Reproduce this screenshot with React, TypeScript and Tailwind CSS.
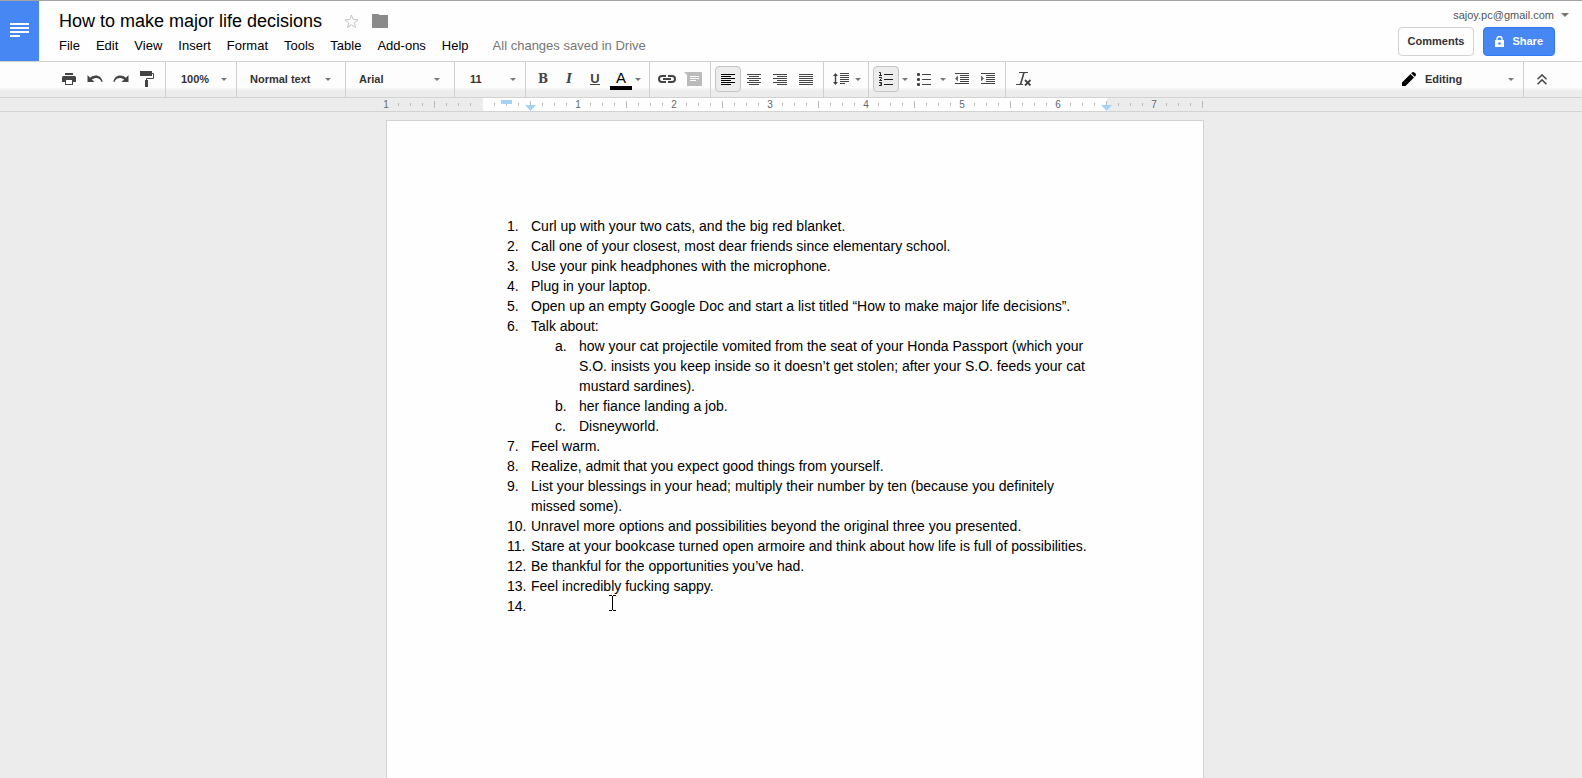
import type { ReactNode } from "react";

const INK = "#444444";

function Caret({ color = "#777777", large = false }: { color?: string; large?: boolean }) {
  return large ? (
    <svg width="8" height="4" viewBox="0 0 8 4" aria-hidden="true">
      <path d="M0 0h8L4 4z" fill={color} />
    </svg>
  ) : (
    <svg width="6" height="3" viewBox="0 0 6 3" aria-hidden="true">
      <path d="M0 0h6L3 3z" fill={color} />
    </svg>
  );
}

function ToolButton({ label, active = false, children }: { label: string; active?: boolean; children: ReactNode }) {
  return (
    <button
      type="button"
      aria-label={label}
      aria-pressed={active}
      className={
        active
          ? "flex size-[26px] items-center justify-center rounded-sm border border-[#c4c4c4] bg-[#ececec] text-black"
          : "flex size-[26px] items-center justify-center text-[#444444]"
      }
    >
      {children}
    </button>
  );
}

function MenuCaret({ label, wide = false }: { label: string; wide?: boolean }) {
  return (
    <button
      type="button"
      aria-label={label}
      className={wide ? "flex h-[26px] w-3 items-center justify-center" : "flex h-[26px] w-2 items-center justify-center"}
    >
      <Caret />
    </button>
  );
}

function Group({ children, className = "px-1" }: { children: ReactNode; className?: string }) {
  return <div className={`flex h-full items-start border-r border-[#cfcfcf] pt-1 ${className}`}>{children}</div>;
}

function ToolSelect({ label, value, className }: { label: string; value: string; className: string }) {
  return (
    <div className={`grid h-full items-start pt-1 ${className}`}>
      <select
        aria-label={label}
        defaultValue={value}
        className="col-start-1 row-start-1 h-[26px] w-full appearance-none bg-transparent text-[11px] font-bold text-[#333333] outline-none"
      >
        <option>{value}</option>
      </select>
      <span className="pointer-events-none col-start-1 row-start-1 flex h-[26px] items-center justify-end">
        <Caret />
      </span>
    </div>
  );
}

function AlignIcon({ lines }: { lines: [number, number][] }) {
  return (
    <svg width="14" height="11" viewBox="0 0 14 11" aria-hidden="true" fill="currentColor">
      {lines.map(([x, w], i) => (
        <rect key={i} x={x} y={i * 2} width={w} height="1" />
      ))}
    </svg>
  );
}

function UndoIcon({ flip = false }: { flip?: boolean }) {
  return (
    <svg width="16" height="10" viewBox="0 0 16 10" aria-hidden="true" className={flip ? "-scale-x-100" : ""}>
      <path d="M.5 1v7h7L4.900 5.500C6.200 4.400 7.700 3.900 9 3.900c2.700 0 4.600 1.400 5.500 4.100l1.200-.5C14.700 3.800 12.300 1.500 9 1.500c-2.300 0-4.200.8-5.900 2.200z" fill={INK} />
    </svg>
  );
}

function IndentIcon({ out = false }: { out?: boolean }) {
  return (
    <svg width="14" height="12" viewBox="0 0 14 12" aria-hidden="true" fill={INK}>
      <rect width="14" height="1" />
      <rect x="5" y="2" width="9" height="1" />
      <rect x="5" y="4" width="9" height="1" />
      <rect x="5" y="6" width="9" height="1" />
      <rect x="5" y="8" width="9" height="1" />
      <rect y="10" width="14" height="1" />
      <path d={out ? "M3 2.500v6L0 5.500z" : "M0 2.500v6l3-3z"} fill="#666666" />
    </svg>
  );
}

function NumberedListIcon() {
  return (
    <svg width="14" height="14" viewBox="0 0 14 14" aria-hidden="true" fill="none" stroke="#222222">
      <path d="M5 2.500h9M5 7.500h9M5 12.500h9" />
      <path d="M0 .5h1.500v3M0 3.500h3M0 5.500h2.500v1L.5 8.500H3M0 10.500h2.500V12H1M2.500 12v1.500H0" />
    </svg>
  );
}

const MENUS = ["File", "Edit", "View", "Insert", "Format", "Tools", "Table", "Add-ons", "Help"];

function Header() {
  return (
    <header className="flex h-[61px] shrink-0 border-t border-[#a3a3a3]">
      <a href="#home" aria-label="Docs home" className="flex w-[39px] shrink-0 justify-center bg-[#4687f4] pt-[22px]">
        <svg width="19" height="14" viewBox="0 0 19 14" aria-hidden="true" fill="#fff">
          <rect width="19" height="2" />
          <rect y="4" width="19" height="2" />
          <rect y="8" width="19" height="2" />
          <rect y="12" width="10" height="2" />
        </svg>
      </a>
      <div className="flex grow flex-col pl-5 pt-2">
        <div className="flex h-6 items-center">
          <h1 className="text-[18px] leading-6 text-black">How to make major life decisions</h1>
          <button type="button" aria-label="Star" className="ml-[22px]">
            <svg width="15" height="15" viewBox="0 0 15 15" aria-hidden="true">
              <path d="M7.500 1l1.700 4.600 4.900.2-3.900 3 1.400 4.700-4.100-2.700-4.100 2.700 1.400-4.700-3.900-3 4.900-.2z" fill="#fff" stroke="#c4c4c4" />
            </svg>
          </button>
          <button type="button" aria-label="Move to folder" className="ml-[13px]">
            <svg width="16" height="14" viewBox="0 0 16 14" aria-hidden="true">
              <path d="M0 0h6l2 1h8v13H0z" fill="#8a8a8a" />
            </svg>
          </button>
        </div>
        <nav className="mt-[3px] flex h-5 items-center gap-4 text-[13px] text-black">
          {MENUS.map((m) => (
            <button key={m} type="button">
              {m}
            </button>
          ))}
          <span className="ml-2 text-[#777777]">All changes saved in Drive</span>
        </nav>
      </div>
      <div className="flex flex-col items-end pt-[6px]">
        <button type="button" className="flex h-4 items-center gap-[7px] pr-[13px] text-[11px] text-[#555555]">
          sajoy.pc@gmail.com
          <Caret large />
        </button>
        <div className="mt-1 flex gap-[9px] pr-[27px]">
          <button type="button" className="h-[29px] rounded-sm border border-[#d2d2d2] px-[9px] text-[11px] font-bold text-[#333333]">
            Comments
          </button>
          <button type="button" className="flex h-[29px] items-center gap-2 rounded-sm border border-[#3079ed] bg-[#4687f4] px-[11px] text-[11px] font-bold text-white">
            <svg width="9" height="11" viewBox="0 0 9 11" aria-hidden="true">
              <path d="M2 5V3a2.500 2.500 0 0 1 5 0v2" fill="none" stroke="#fff" strokeWidth="1.400" />
              <rect y="4" width="9" height="7" fill="#fff" />
              <circle cx="4.500" cy="7.500" r="1.300" fill="#4687f4" />
            </svg>
            Share
          </button>
        </div>
      </div>
    </header>
  );
}

function Toolbar() {
  return (
    <div
      role="toolbar"
      className="flex h-[37px] shrink-0 border-y border-[#d2d2d2] bg-[linear-gradient(#fdfdfd_26px,#f5f5f5_26px,#f5f5f5_28px,#ececec_28px)]"
    >
      <Group className="pl-14 pr-[5px]">
        <ToolButton label="Print">
          <svg width="14" height="12" viewBox="0 0 14 12" aria-hidden="true">
            <rect x="3" width="8" height="2" fill={INK} />
            <path d="M1 3h12l1 1v5h-3v3H3V9H0V4z" fill={INK} />
            <rect x="4" y="7" width="6" height="4" fill="#fff" />
          </svg>
        </ToolButton>
        <ToolButton label="Undo">
          <UndoIcon />
        </ToolButton>
        <ToolButton label="Redo">
          <UndoIcon flip />
        </ToolButton>
        <ToolButton label="Paint format">
          <svg width="14" height="16" viewBox="0 0 14 16" aria-hidden="true">
            <rect width="12" height="5" fill={INK} />
            <path d="M12 2.500h1.500v5h-7V10" fill="none" stroke={INK} />
            <rect x="5" y="9" width="3" height="7" fill={INK} />
          </svg>
        </ToolButton>
      </Group>
      <ToolSelect label="Zoom" value="100%" className="w-[71px] border-r border-[#cfcfcf] pl-[15px] pr-[9px]" />
      <ToolSelect label="Styles" value="Normal text" className="w-[109px] border-r border-[#cfcfcf] pl-[13px] pr-[14px]" />
      <ToolSelect label="Font" value="Arial" className="w-[109px] border-r border-[#cfcfcf] pl-[13px] pr-[14px]" />
      <ToolSelect label="Font size" value="11" className="w-[71px] border-r border-[#cfcfcf] pl-[15px] pr-[9px]" />
      <Group className="pl-1 pr-[7px]">
        <ToolButton label="Bold">
          <span className="font-['DejaVu_Serif'] text-[12px] font-bold leading-none">B</span>
        </ToolButton>
        <ToolButton label="Italic">
          <span className="font-['DejaVu_Serif'] text-[12px] font-bold italic leading-none">I</span>
        </ToolButton>
        <ToolButton label="Underline">
          <span className="border-b border-[#444444] font-['Liberation_Sans'] text-[13px] font-bold leading-[11px]">U</span>
        </ToolButton>
        <ToolButton label="Text color">
          <span className="flex w-[22px] shrink-0 flex-col items-center self-start border-b-4 border-black pt-[3px] text-[15px] leading-[17px] text-black">
            A
          </span>
        </ToolButton>
        <MenuCaret label="Text color options" />
      </Group>
      <Group className="pl-1 pr-1">
        <ToolButton label="Insert link">
          <svg width="18" height="8" viewBox="0 0 18 8" aria-hidden="true" fill="none" stroke={INK} strokeWidth="2">
            <path d="M8 1H4a3 3 0 0 0 0 6h4M10 1h4a3 3 0 0 1 0 6h-4M5 4h8" />
          </svg>
        </ToolButton>
        <ToolButton label="Insert comment">
          <svg width="18" height="14" viewBox="0 0 18 14" aria-hidden="true">
            <path d="M0 0h18v14H3V3z" fill="#bbbbbb" />
            <path d="M6 4.500h9M6 6.500h9M6 8.500h6" stroke="#fff" />
          </svg>
        </ToolButton>
      </Group>
      <Group>
        <ToolButton label="Align left" active>
          <AlignIcon lines={[[0, 14], [0, 10], [0, 14], [0, 10], [0, 14], [0, 10]]} />
        </ToolButton>
        <ToolButton label="Align center">
          <AlignIcon lines={[[0, 14], [2, 10], [0, 14], [2, 10], [0, 14], [2, 10]]} />
        </ToolButton>
        <ToolButton label="Align right">
          <AlignIcon lines={[[0, 14], [4, 10], [0, 14], [4, 10], [0, 14], [4, 10]]} />
        </ToolButton>
        <ToolButton label="Justify">
          <AlignIcon lines={[[0, 14], [0, 14], [0, 14], [0, 14], [0, 14], [0, 14]]} />
        </ToolButton>
      </Group>
      <Group className="pl-1 pr-[6px]">
        <ToolButton label="Line spacing">
          <svg width="16" height="12" viewBox="0 0 16 12" aria-hidden="true" fill={INK}>
            <path d="M2.500 0L5 3H3.200v6H5l-2.500 3L0 9h1.800V3H0z" />
            <path d="M7 0h9v1H7zM7 2h9v1H7zM7 4h9v1H7zM7 6h9v1H7zM7 8h9v1H7zM7 10h5v1H7z" />
          </svg>
        </ToolButton>
        <MenuCaret label="Line spacing options" />
      </Group>
      <Group>
        <ToolButton label="Numbered list" active>
          <NumberedListIcon />
        </ToolButton>
        <MenuCaret label="Numbered list options" wide />
        <ToolButton label="Bulleted list">
          <svg width="14" height="14" viewBox="0 0 14 14" aria-hidden="true" fill={INK}>
            <rect y="1" width="3" height="3" rx="1" />
            <rect y="6" width="3" height="3" rx="1" />
            <rect y="11" width="3" height="3" rx="1" />
            <path d="M5 2h9v1H5zM5 7h9v1H5zM5 12h9v1H5z" />
          </svg>
        </ToolButton>
        <MenuCaret label="Bulleted list options" wide />
        <ToolButton label="Decrease indent">
          <IndentIcon out />
        </ToolButton>
        <ToolButton label="Increase indent">
          <IndentIcon />
        </ToolButton>
      </Group>
      <div className="flex grow items-start pl-[5px] pt-1">
        <ToolButton label="Clear formatting">
          <svg width="16" height="14" viewBox="0 0 16 14" aria-hidden="true" fill="none" stroke={INK}>
            <path d="M3 .5h9M0 12.500h7" />
            <path d="M8 .5L4.500 12.500" strokeWidth="1.600" />
            <path d="M9 8l5.500 5.500M14.500 8L9 13.500" strokeWidth="1.800" />
          </svg>
        </ToolButton>
      </div>
      <div className="flex h-full items-start border-r border-[#cfcfcf]">
        <span className="flex h-[34px] items-center pr-[9px]">
          <svg width="14" height="14" viewBox="0 0 14 14" aria-hidden="true">
            <path d="M0 14v-3.500L8.500 2 12 5.500 3.500 14zM9.200 1.300L10 .5q1.200-1 2.400 0l1.100 1.100q1 1.200 0 2.400l-.8.800z" fill="#000" />
          </svg>
        </span>
        <ToolSelect label="Mode" value="Editing" className="w-[98px] pr-[9px]" />
      </div>
      <div className="flex w-[58px] items-start pl-[5px] pt-1">
        <ToolButton label="Hide the menus">
          <svg width="10" height="11" viewBox="0 0 10 11" aria-hidden="true" fill="none" stroke={INK} strokeWidth="1.500">
            <path d="M.5 5.200L5 .9l4.500 4.300M.5 10.200L5 5.900l4.500 4.300" />
          </svg>
        </ToolButton>
      </div>
    </div>
  );
}

const EIGHTHS = Array.from({ length: 69 }, (_, i) => i - 8);

function RulerMark({ at }: { at: number }) {
  if (at % 8 === 0 && at !== 0) {
    return <>{Math.abs(at / 8)}</>;
  }
  return at % 4 === 0 ? <span className="h-[7px] w-px bg-[#bbbbbb]" /> : <span className="h-[3px] w-px bg-[#bbbbbb]" />;
}

function Ruler() {
  return (
    <div className="flex h-[14px] shrink-0 justify-center overflow-hidden border-b border-[#d2d2d2] bg-[#ececec] pl-1.5">
      <div className="relative grid w-[828px] shrink-0">
        <div className="col-start-1 row-start-1 ml-[103px] w-[720px] bg-white" />
        <div className="col-start-1 row-start-1 ml-[727px] bg-[#ececec]" />
        <div className="col-start-1 row-start-1 flex">
          {EIGHTHS.map((at) => (
            <div key={at} className="flex w-3 items-center justify-center text-[10px] leading-none text-[#666666]">
              {at !== 0 && <RulerMark at={at} />}
            </div>
          ))}
        </div>
        <span className="absolute left-[121px] top-0.5 h-1 w-[11px] bg-[#a6d2f8]" />
        <svg className="absolute left-[145px] top-[7px]" width="11" height="6" viewBox="0 0 11 6" aria-hidden="true">
          <path d="M0 0h11L5.500 6z" fill="#a6d2f8" />
        </svg>
        <svg className="absolute left-[721px] top-[7px]" width="11" height="6" viewBox="0 0 11 6" aria-hidden="true">
          <path d="M0 0h11L5.500 6z" fill="#a6d2f8" />
        </svg>
      </div>
    </div>
  );
}

type Item = { text: string; children?: string[] };

const ITEMS: Item[] = [
  { text: "Curl up with your two cats, and the big red blanket." },
  { text: "Call one of your closest, most dear friends since elementary school." },
  { text: "Use your pink headphones with the microphone." },
  { text: "Plug in your laptop." },
  { text: "Open up an empty Google Doc and start a list titled “How to make major life decisions”." },
  {
    text: "Talk about:",
    children: [
      "how your cat projectile vomited from the seat of your Honda Passport (which your S.O. insists you keep inside so it doesn’t get stolen; after your S.O. feeds your cat mustard sardines).",
      "her fiance landing a job.",
      "Disneyworld.",
    ],
  },
  { text: "Feel warm." },
  { text: "Realize, admit that you expect good things from yourself." },
  { text: "List your blessings in your head; multiply their number by ten (because you definitely missed some)." },
  { text: "Unravel more options and possibilities beyond the original three you presented." },
  { text: "Stare at your bookcase turned open armoire and think about how life is full of possibilities." },
  { text: "Be thankful for the opportunities you’ve had." },
  { text: "Feel incredibly fucking sappy." },
  { text: "" },
];

function DocumentPage() {
  return (
    <article className="relative min-h-[1056px] w-[818px] shrink-0 border border-[#d2d2d2] bg-[#fefefe] px-24 pt-[95px]">
      <ol className="pl-6 pr-3 text-[14px] leading-5 text-black">
        {ITEMS.map((item, i) => (
          <li key={i} className="flex">
            <span className="w-6 shrink-0">{i + 1}.</span>
            <div className="grow">
              {item.text}
              {item.children && (
                <ol className="pl-6">
                  {item.children.map((child, j) => (
                    <li key={j} className="flex">
                      <span className="w-6 shrink-0">{"abc"[j]}.</span>
                      <span>{child}</span>
                    </li>
                  ))}
                </ol>
              )}
            </div>
          </li>
        ))}
      </ol>
      <svg className="absolute left-[222px] top-[474px]" width="7" height="16" viewBox="0 0 7 16" aria-hidden="true">
        <path d="M0 .5h3M4 .5h3M3.500 1v14M0 15.500h3M4 15.500h3" stroke="#000" fill="none" />
      </svg>
    </article>
  );
}

export default function App() {
  return (
    <div className="flex h-screen flex-col overflow-hidden bg-[#fefefe] font-['Liberation_Sans',Arial,sans-serif]">
      <Header />
      <Toolbar />
      <Ruler />
      <main className="flex grow justify-center overflow-hidden bg-[#ececec] pl-2 pt-2">
        <DocumentPage />
      </main>
    </div>
  );
}
